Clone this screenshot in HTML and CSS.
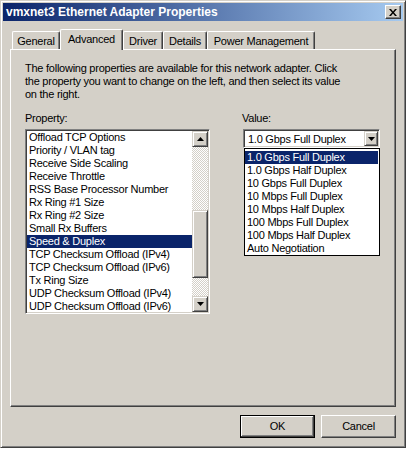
FILE: index.html
```html
<!DOCTYPE html>
<html>
<head>
<meta charset="utf-8">
<link rel="stylesheet" href="styles.css">
</head>
<body>
<div class="window">
  <div class="titlebar">
    <span class="title">vmxnet3 Ethernet Adapter Properties</span>
    <span class="close">
      <svg width="8" height="7" viewBox="0 0 8 7"><path d="M0 0h2l2 2.5L6 0h2L5 3.5 8 7H6L4 4.5 2 7H0l3-3.5z" fill="#000"/></svg>
    </span>
  </div>
  <div class="tabs">
    <div class="tab tab-general">General</div>
    <div class="tab tab-advanced active">Advanced</div>
    <div class="tab tab-driver">Driver</div>
    <div class="tab tab-details">Details</div>
    <div class="tab tab-power">Power Management</div>
  </div>
  <div class="panel">
    <p class="desc">The following properties are available for this network adapter. Click<br>the property you want to change on the left, and then select its value<br>on the right.</p>
    <div class="cols">
      <div class="col-left">
        <div class="label">Property:</div>
        <div class="listbox">
          <div class="items">
            <div class="item">Offload TCP Options</div>
            <div class="item">Priority / VLAN tag</div>
            <div class="item">Receive Side Scaling</div>
            <div class="item">Receive Throttle</div>
            <div class="item">RSS Base Processor Number</div>
            <div class="item">Rx Ring #1 Size</div>
            <div class="item">Rx Ring #2 Size</div>
            <div class="item">Small Rx Buffers</div>
            <div class="item selected">Speed &amp; Duplex</div>
            <div class="item">TCP Checksum Offload (IPv4)</div>
            <div class="item">TCP Checksum Offload (IPv6)</div>
            <div class="item">Tx Ring Size</div>
            <div class="item">UDP Checksum Offload (IPv4)</div>
            <div class="item">UDP Checksum Offload (IPv6)</div>
          </div>
          <div class="vscroll">
            <div class="sbtn">
              <svg width="7" height="4" viewBox="0 0 7 4"><path d="M3.5 0L7 4H0z" fill="#000"/></svg>
            </div>
            <div class="track track-top"></div>
            <div class="thumb"></div>
            <div class="track track-bottom"></div>
            <div class="sbtn">
              <svg width="7" height="4" viewBox="0 0 7 4"><path d="M0 0h7L3.5 4z" fill="#000"/></svg>
            </div>
          </div>
        </div>
      </div>
      <div class="col-right">
        <div class="label">Value:</div>
        <div class="combo-wrap">
          <div class="combo">
            <span class="combo-text">1.0 Gbps Full Duplex</span>
            <span class="dd-btn">
              <svg width="7" height="4" viewBox="0 0 7 4"><path d="M0 0h7L3.5 4z" fill="#000"/></svg>
            </span>
          </div>
          <div class="dropdown">
            <div class="opt selected">1.0 Gbps Full Duplex</div>
            <div class="opt">1.0 Gbps Half Duplex</div>
            <div class="opt">10 Gbps Full Duplex</div>
            <div class="opt">10 Mbps Full Duplex</div>
            <div class="opt">10 Mbps Half Duplex</div>
            <div class="opt">100 Mbps Full Duplex</div>
            <div class="opt">100 Mbps Half Duplex</div>
            <div class="opt">Auto Negotiation</div>
          </div>
        </div>
      </div>
    </div>
  </div>
  <div class="buttons">
    <div class="btn btn-default">OK</div>
    <div class="btn">Cancel</div>
  </div>
</div>
</body>
</html>
```
FILE: styles.css
```css
html, body {
  margin: 0;
  padding: 0;
  background: #ffffff;
}

body {
  font-family: "Liberation Sans", Arial, sans-serif;
  font-size: 11px;
  letter-spacing: -0.25px;
  color: #000;
}

.window {
  box-sizing: border-box;
  width: 406px;
  height: 448px;
  background: #d4d0c8;
  border: 1px solid;
  border-color: #d4d0c8 #404040 #404040 #d4d0c8;
  box-shadow: inset 1px 1px #ffffff, inset -1px -1px #808080;
  padding: 2px;
}

.titlebar {
  height: 18px;
  background: linear-gradient(to right, #0a246a, #a6caf0);
  display: flex;
  align-items: center;
  justify-content: space-between;
  padding: 0 2px 0 3px;
}

.title {
  color: #fff;
  font-weight: bold;
  font-size: 12px;
  letter-spacing: 0;
  line-height: 18px;
}

.close {
  box-sizing: border-box;
  width: 16px;
  height: 14px;
  background: #d4d0c8;
  border: 1px solid;
  border-color: #fff #404040 #404040 #fff;
  box-shadow: inset -1px -1px #808080;
  display: flex;
  align-items: center;
  justify-content: center;
}

.close svg {
  display: block;
}

.tabs {
  display: flex;
  align-items: flex-end;
  margin: 8px 0 0 9px;
  height: 21px;
}

.tab {
  box-sizing: border-box;
  height: 18px;
  margin-bottom: 1px;
  border: 1px solid;
  border-bottom: none;
  border-color: #fff #404040 #404040 #fff;
  box-shadow: inset -1px 0 #808080;
  border-radius: 2px 2px 0 0;
  text-align: center;
  line-height: 17px;
  padding-top: 1px;
  background: #d4d0c8;
}

.tab.active {
  height: 21px;
  margin-bottom: 0;
  line-height: 17px;
  padding-top: 1px;
  position: relative;
  z-index: 1;
}

.tab-general { width: 48px; }
.tab-advanced { width: 63px; }
.tab-driver { width: 40px; }
.tab-details { width: 44px; }
.tab-power { width: 108px; }

.panel {
  box-sizing: border-box;
  width: 386px;
  height: 358px;
  margin: -1px 0 0 7px;
  border: 1px solid;
  border-color: #fff #404040 #404040 #fff;
  box-shadow: inset -1px -1px #808080;
  padding: 12px 14px 0 14px;
}

.desc {
  margin: 0;
  line-height: 13px;
  white-space: nowrap;
}

.cols {
  display: flex;
  margin-top: 11px;
}

.label {
  line-height: 13px;
  height: 13px;
  margin-bottom: 4px;
}

.col-left {
  width: 185px;
}

.col-right {
  margin-left: 32px;
  width: 140px;
}

.listbox {
  box-sizing: border-box;
  width: 185px;
  height: 185px;
  background: #fff;
  border: 1px solid;
  border-color: #808080 #fff #fff #808080;
  box-shadow: inset 1px 1px #404040, inset -1px -1px #d4d0c8;
  padding: 1px;
  display: flex;
}

.items {
  flex: 1;
  overflow: hidden;
}

.item {
  line-height: 13px;
  height: 13px;
  padding-left: 2px;
  white-space: nowrap;
}

.item.selected {
  background: #0a246a;
  color: #fff;
}

.vscroll {
  width: 16px;
  display: flex;
  flex-direction: column;
}

.sbtn {
  box-sizing: border-box;
  width: 16px;
  height: 16px;
  background: #d4d0c8;
  border: 1px solid;
  border-color: #d4d0c8 #404040 #404040 #d4d0c8;
  box-shadow: inset 1px 1px #fff, inset -1px -1px #808080;
  display: flex;
  align-items: center;
  justify-content: center;
}

.sbtn svg, .dd-btn svg {
  display: block;
}

.track {
  background-color: #fff;
  background-image: conic-gradient(#d4d0c8 25%, #fff 0 50%, #d4d0c8 0 75%, #fff 0);
  background-size: 2px 2px;
}

.track-top { height: 63px; }
.track-bottom { flex: 1; }

.thumb {
  box-sizing: border-box;
  height: 68px;
  background: #d4d0c8;
  border: 1px solid;
  border-color: #d4d0c8 #404040 #404040 #d4d0c8;
  box-shadow: inset 1px 1px #fff, inset -1px -1px #808080;
}

.combo-wrap {
  position: relative;
  margin-left: 1px;
}

.combo {
  box-sizing: border-box;
  width: 137px;
  height: 19px;
  background: #fff;
  border: 1px solid;
  border-color: #808080 #fff #fff #808080;
  box-shadow: inset 1px 1px #404040, inset -1px -1px #d4d0c8;
  padding: 1px;
  display: flex;
  align-items: stretch;
}

.combo-text {
  flex: 1;
  padding-left: 3px;
  line-height: 16px;
  white-space: nowrap;
}

.dd-btn {
  box-sizing: border-box;
  width: 14px;
  background: #d4d0c8;
  border: 1px solid;
  border-color: #d4d0c8 #404040 #404040 #d4d0c8;
  box-shadow: inset 1px 1px #fff, inset -1px -1px #808080;
  display: flex;
  align-items: center;
  justify-content: center;
}

.dropdown {
  position: absolute;
  top: 19px;
  left: 1px;
  box-sizing: border-box;
  width: 136px;
  height: 108px;
  background: #fff;
  border: 1px solid #000;
  padding: 2px 1px 0 0;
  z-index: 5;
}

.opt {
  line-height: 13px;
  height: 13px;
  padding-left: 2px;
  white-space: nowrap;
}

.opt.selected {
  background: #0a246a;
  color: #fff;
}

.buttons {
  display: flex;
  justify-content: flex-end;
  gap: 6px;
  margin: 8px 7px 0 0;
}

.btn {
  box-sizing: border-box;
  width: 75px;
  height: 23px;
  background: #d4d0c8;
  border: 1px solid;
  border-color: #fff #404040 #404040 #fff;
  box-shadow: inset -1px -1px #808080;
  text-align: center;
  line-height: 21px;
}

.btn-default {
  border-color: #000;
  box-shadow: inset -1px -1px #404040, inset 1px 1px #fff, inset -2px -2px #808080;
}
```
